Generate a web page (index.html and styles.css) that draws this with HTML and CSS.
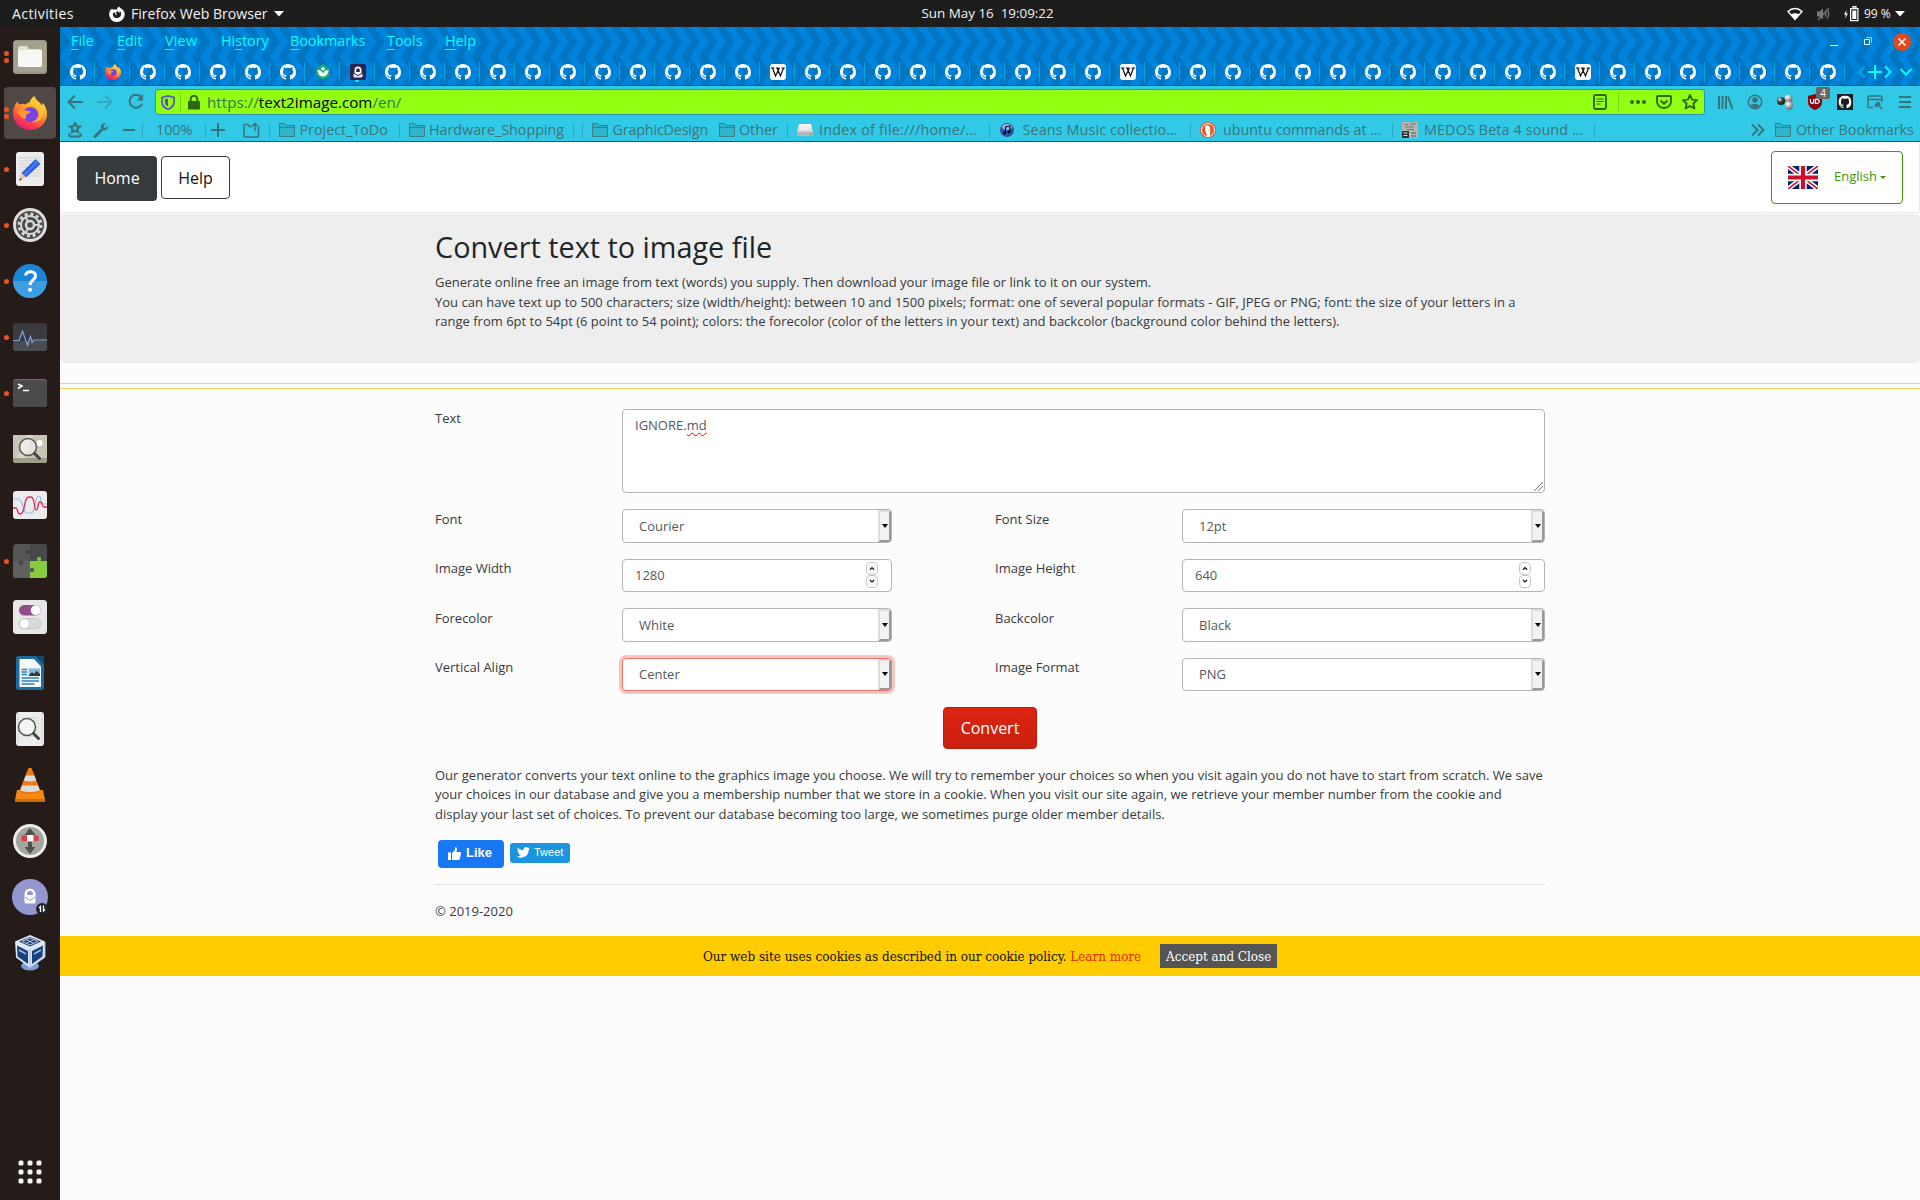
FILE: index.html
```html
<!DOCTYPE html>
<html lang="en">
<head>
<meta charset="utf-8">
<title>Convert text to image file</title>
<link rel="stylesheet" href="styles.css">
</head>
<body>
<svg class="defs" width="0" height="0">
  <defs>
    <linearGradient id="fx" x1=".8" y1="0" x2=".3" y2="1"><stop offset="0" stop-color="#fff14a"/><stop offset=".35" stop-color="#ffb02a"/><stop offset=".7" stop-color="#ff4f3c"/><stop offset="1" stop-color="#e5147a"/></linearGradient>
    <linearGradient id="silver" x1="0" y1="0" x2="0" y2="1"><stop offset="0" stop-color="#fff"/><stop offset="1" stop-color="#b9b9b9"/></linearGradient>
    <radialGradient id="ball" cx=".35" cy=".3" r=".8"><stop offset="0" stop-color="#fff"/><stop offset="1" stop-color="#555"/></radialGradient>
    <radialGradient id="dark" cx=".35" cy=".3" r=".8"><stop offset="0" stop-color="#ddd"/><stop offset=".5" stop-color="#333"/><stop offset="1" stop-color="#111"/></radialGradient>
    <symbol id="github" viewBox="0 0 16 16"><path d="M8 0C3.58 0 0 3.58 0 8c0 3.54 2.29 6.53 5.47 7.59.4.07.55-.17.55-.38 0-.19-.01-.82-.01-1.49-2.01.37-2.53-.49-2.69-.94-.09-.23-.48-.94-.82-1.13-.28-.15-.68-.52-.01-.53.63-.01 1.08.58 1.23.82.72 1.21 1.87.87 2.33.66.07-.52.28-.87.51-1.07-1.78-.2-3.64-.89-3.64-3.95 0-.87.31-1.59.82-2.15-.08-.2-.36-1.02.08-2.12 0 0 .67-.21 2.2.82.64-.18 1.32-.27 2-.27s1.36.09 2 .27c1.53-1.04 2.2-.82 2.2-.82.44 1.1.16 1.92.08 2.12.51.56.82 1.27.82 2.15 0 3.07-1.87 3.75-3.65 3.95.29.25.54.73.54 1.48 0 1.07-.01 1.93-.01 2.2 0 .21.15.46.55.38A8.01 8.01 0 0 0 16 8c0-4.42-3.58-8-8-8z"/></symbol>
    <symbol id="firefox" viewBox="0 0 34 34"><path d="M17 34C7.500 34 0 27 0 17.500 0 12 2 8 4.500 5.500 4.800 7 5.500 8 6.500 8.500 9 7.500 10.500 7.600 12.500 8.500c1.500-1.500 2.500-1.800 4-2C17 4 19 1.500 21.500 0c.5 3.500 5 5.500 7.500 9.500.5-1 .5-2 .3-3C32 9 34 13.500 34 18c0 9-7.500 16-17 16z" fill="url(#fx)"/><circle cx="17.500" cy="18.500" r="7.600" fill="#7542e5"/><path d="M4.500 14.500c4-2.500 7-.5 8.500 0 2.500.5 5 .5 4.500 1.600-.5 1.200-2.500 1.500-4 2.500-1 1-.8 3-.3 4.400-4 0-7.700-3-8.700-8.500z" fill="#ff9a2e"/><path d="M18 8c3 0 8 3 8.500 9 .3 5-4 9-9 8.500 7 2 13.500-2.500 13-9.500C30 10 23 5 22 1c-2.500 2-3.500 5-4 7z" fill="#ffc43a" opacity=".8"/></symbol>
    <symbol id="wiki" viewBox="0 0 16 16"><rect width="16" height="16" rx="3" fill="#fff"/><path d="M1 4h3.500M6 4h3.500M11.500 4H15M2.500 4l3 8 4-8M7 4l3.500 8 3-8" fill="none" stroke="#111" stroke-width="1.200"/></symbol>
    <symbol id="leaf" viewBox="0 0 16 16"><path d="M8 0l6.900 4v8L8 16l-6.900-4V4z" fill="#16a679"/><path d="M2.500 6c3 0 5 1.500 5.500 4 .5-2.500 2.500-4 5.500-4-.2 4-2.300 6.500-5.500 6.500S2.700 10 2.500 6z" fill="#fff"/><circle cx="8" cy="4.800" r="1.800" fill="#fff"/></symbol>
    <symbol id="proton" viewBox="0 0 16 16"><rect width="16" height="16" rx="2" fill="#2b2450"/><path d="M4.500 9V6a3.500 3.500 0 0 1 7 0v3L8 11zM6.200 8h3.600V6a1.800 1.800 0 0 0-3.600 0z" fill="#fff" fill-rule="evenodd"/><path d="M3.500 9.500L8 12l4.500-2.500v3q0 1-1 1h-7q-1 0-1-1z" fill="#e6e3f3"/></symbol>
    <symbol id="folder" viewBox="0 0 16 14"><path d="M.5 13.500V.5h5l1.500 2h8.500v11zM.5 4.500h15" fill="#2fb3cb" stroke="#397f84"/></symbol>
    <symbol id="lens" viewBox="0 0 34 34"><circle cx="15" cy="13" r="8.500" fill="#fff" fill-opacity=".55" stroke="#555" stroke-width="1.500"/><path d="M21.500 19.500l5 5" stroke="#444" stroke-width="3" stroke-linecap="round"/></symbol>
  </defs>
</svg>

<header class="topbar">
  <span class="act">Activities</span>
  <svg width="16" height="16" viewBox="0 0 16 16"><path d="M8 16A7.700 7.700 0 0 1 1.500 4L3.200 2.500l.6 1.300 2-.6 1.500.8L8.500 2 10 .2l.8 1.600C14 3 15.700 5.500 15.700 8.400A7.700 7.700 0 0 1 8 16zM5.500 6.300l-1.500.8c-.6 2.500 1 5 4 5 4 0 5.500-5 2.700-7l.3 2C10 6.200 9.500 5.500 8.200 5.300L6.500 7.200l1.500.6-1 1.700z" fill="#fff" fill-rule="evenodd"/></svg>
  <span class="app">Firefox Web Browser</span>
  <svg width="10" height="6"><path d="M0 0h10L5 5.500z" fill="#fff"/></svg>
  <span class="clock">Sun May 16&nbsp; 19:09:22</span>
  <svg width="16" height="14" viewBox="0 0 16 14"><path d="M1 4.500C5 .5 11 .5 15 4.500L8 12.500z" fill="none" stroke="#fff" stroke-width="1.300"/><path d="M4 7.500q4-2.500 8 0l-4 5z" fill="#fff"/></svg>
  <svg width="15" height="14" viewBox="0 0 15 14"><path d="M1 4.500h2.500L7 1.500v11L3.500 9.500H1z" fill="#777"/><path d="M9 4.500q2 2.500 0 5M11 2.500q3.500 4.500 0 9M13 1L2 13" fill="none" stroke="#777" stroke-width="1.300"/></svg>
  <svg width="15" height="16" viewBox="0 0 15 16"><path d="M2.500 4L0 8.500h1.800L1 12.500l3-5H2.200z" fill="#fff"/><path d="M6.600 2.600h7.300v12H6.600zM9 .5h3v1.500H9z" fill="none" stroke="#fff" stroke-width="1.200"/><path d="M8.300 4.500h4V13h-4z" fill="#fff"/></svg>
  <span class="batt">99 %</span>
  <svg width="10" height="6"><path d="M0 0h10L5 5.500z" fill="#fff"/></svg>
</header>

<div class="desktop">
<nav class="dock">
  <div class="item run2"><i></i><svg viewBox="0 0 34 34"><rect width="34" height="34" rx="3.500" fill="#979382"/><rect x="1" y="1" width="32" height="31" rx="3" fill="#a5a18f"/><path d="M5 8q0-2 2-2h7l2 3h11q2 0 2 2v14q0 2-2 2H7q-2 0-2-2z" fill="#e3dfd5"/><rect x="5" y="10" width="24" height="17" rx="2" fill="#f7f7f5"/></svg></div>
  <div class="item run2 active"><i></i><svg><use href="#firefox"/></svg></div>
  <div class="item run"><i></i><svg viewBox="0 0 34 34"><rect x="3" width="28" height="34" rx="3" fill="#ededed"/><path d="M6 6h22M6 9h22M6 12h22M6 15h22M6 18h22M6 21h22M6 24h22" stroke="#cfcfcf"/><path d="M22.500 7l5 5L13 25.500 8.500 21z" fill="#2f62dd"/><path d="M24.500 9.500L11 23.500" stroke="#5288f5" stroke-width="1.500"/><path d="M8.500 21l4.500 4.500-6.500 3z" fill="#e8c9a0"/><path d="M7.300 26l1.500 1.500-2.500 1.200z" fill="#222"/></svg></div>
  <div class="item run"><i></i><svg viewBox="0 0 34 34"><circle cx="17" cy="17" r="17" fill="#dedede"/><circle cx="17" cy="17" r="14" fill="#4a4a4a"/><circle cx="17" cy="17" r="11" fill="none" stroke="#d8d8d8" stroke-width="3" stroke-dasharray="3 2.760"/><circle cx="17" cy="17" r="9" fill="none" stroke="#d8d8d8" stroke-width="2"/><circle cx="17" cy="17" r="4" fill="none" stroke="#d8d8d8" stroke-width="2.500"/><path d="M21 17h5M15 13.500l-2.500-4.500M15 20.500L12.500 25" stroke="#d8d8d8" stroke-width="2"/></svg></div>
  <div class="item run"><i></i><svg viewBox="0 0 34 34"><circle cx="17" cy="17" r="17" fill="#1a85d6"/><path d="M0 17a17 17 0 0 0 34 0z" fill="#3d9fe2"/><path d="M12.500 11.500c1-5 10.500-5 10 .5-.3 4-5.500 4.500-5.500 9" fill="none" stroke="#fff" stroke-width="3"/><circle cx="17" cy="25.800" r="2" fill="#fff"/></svg></div>
  <div class="item run"><i></i><svg viewBox="0 0 34 34"><rect y="3" width="34" height="28" rx="3" fill="#3a3b3e"/><rect y="21" width="34" height="10" rx="3" fill="#4b4c52"/><path d="M0 20.500h6L9.500 11l5 14.500 3-9 1.700 6 1.500-2.500H34" fill="none" stroke="#8aa0e6" stroke-width="1.200"/></svg></div>
  <div class="item run"><i></i><svg viewBox="0 0 34 34"><rect y="3" width="34" height="28" rx="3" fill="#6a6a6a"/><rect y="4" width="34" height="27" rx="3" fill="#4b4b4b"/><path d="M5 8l4 2-4 2.500M10 14.500h6" fill="none" stroke="#fff" stroke-width="1.500"/></svg></div>
  <div class="item"><i></i><svg viewBox="0 0 34 34"><rect y="3" width="34" height="28" rx="3" fill="#d8d7cc"/><path d="M0 3h14L4 26H0zM20 3h14v23H12z" fill="#c6c5b6"/><path d="M0 26h34v2q0 3-3 3H3q-3 0-3-3z" fill="#a09c8a"/><circle cx="26.500" cy="11" r="3" fill="#fff"/><use href="#lens" y="2"/></svg></div>
  <div class="item"><i></i><svg viewBox="0 0 34 34"><rect y="3" width="34" height="28" rx="3" fill="#ececec"/><path d="M0 11h5c6 0 4 14 9 14h4c5 0 3-17 8-17 3 0 1 8 4 8h4" fill="none" stroke="#8fbfe6" stroke-width="1.200"/><path d="M0 20h3c2 0 1 6 4 6 6 0 3-17 9-17h2c4 0 3 13 5 13 3 0 1-8 4-8s2 5 4 5h3" fill="none" stroke="#dd2c50" stroke-width="1.300"/></svg></div>
  <div class="item run"><i></i><svg viewBox="0 0 34 34"><rect width="34" height="34" rx="3.500" fill="#555"/><path d="M17 0h14q3 0 3 3v14H17z" fill="#484848"/><path d="M0 17h17v17H3q-3 0-3-3z" fill="#606060"/><path d="M17 17h17v14q0 3-3 3H17z" fill="#86cc3c"/><circle cx="14.500" cy="8" r="2.200" fill="#444"/><circle cx="8" cy="19" r="2.200" fill="#444"/><circle cx="26" cy="15" r="2.200" fill="#76c032"/><circle cx="19" cy="26" r="2.200" fill="#555"/></svg></div>
  <div class="item"><i></i><svg viewBox="0 0 34 34"><rect width="34" height="34" rx="3.500" fill="#e8e8e8"/><rect x="6" y="5" width="22" height="10.500" rx="5.200" fill="#924d8b"/><circle cx="22.800" cy="10.200" r="5" fill="#fff"/><rect x="6" y="18.500" width="22" height="10.500" rx="5.200" fill="#d9d9d9" stroke="#bbb" stroke-width=".7"/><circle cx="11.500" cy="23.700" r="5" fill="#fff" stroke="#bbb" stroke-width=".7"/></svg></div>
  <div class="item"><i></i><svg viewBox="0 0 34 34"><path d="M6 0h17l8 8v23q0 3-3 3H6q-3 0-3-3V3q0-3 3-3z" fill="#1e6c9f"/><path d="M6.500 3H21l7 7.500V31H6.500z" fill="#f4f8fb"/><path d="M24 0h7v8z" fill="#0f4b74"/><path d="M8.500 13.500h5.500M8.500 16h5.500M8.500 18.500h5.500M8.500 22h17.500M8.500 25h17.500M8.500 28h13" stroke="#2680b8" stroke-width="1.300"/><path d="M15.500 12.500H27v7.500H15.500z" fill="#84b9dc"/><path d="M15.500 20l3.500-4 2 2 2.500-3L27 18v2z" fill="#333"/></svg></div>
  <div class="item"><i></i><svg viewBox="0 0 34 34"><rect x="3" width="28" height="34" rx="3" fill="#eee"/><path d="M5 2v30M29 2v30" stroke="#999" stroke-dasharray="1 1.500"/><path d="M8 6h18M8 9h18M8 12h18M8 15h18M8 18h18M8 21h18M8 24h18" stroke="#d2d0c0" stroke-width=".8"/><use href="#lens" x="-1" y="2"/></svg></div>
  <div class="item"><i></i><svg viewBox="0 0 34 34"><path d="M4 22h26l2 10q0 2-2 2H4q-2 0-2-2z" fill="#f28a13"/><path d="M2 31h30v3H2z" fill="#d36c05"/><path d="M15.500 0h3L28 24q-11 4-22 0z" fill="#ee7a10"/><path d="M12.800 7.500h8.400l2 5q-6.200 2-12.400 0zM9 17.500h16l1.700 5q-9.700 3-19.400 0z" fill="#dcdcdc"/></svg></div>
  <div class="item"><i></i><svg viewBox="0 0 34 34"><circle cx="17" cy="17" r="17" fill="#ececec"/><circle cx="17" cy="17" r="14" fill="#a3a59f"/><path d="M17 4l5.500 7H19v12h3.500L17 30l-5.500-7H15V11h-3.500z" fill="#4e504c"/><rect x="8.500" y="11.500" width="17" height="5.500" rx="1" fill="#e23b4e"/><rect x="14" y="11" width="6.500" height="6.500" rx="1" fill="#fff"/></svg></div>
  <div class="item"><i></i><svg viewBox="0 0 34 34"><circle cx="17" cy="17" r="18" fill="#9396cf"/><path d="M11.500 22v-8a5.500 5.500 0 0 1 11 0v8q0 1.500-1.500 1.500h-8q-1.500 0-1.500-1.500zM14 15h6v-1a3 3 0 0 0-6 0z" fill="#fff" fill-rule="evenodd"/><path d="M12 17l5 3.500 5-3.500" fill="none" stroke="#9396cf"/><circle cx="29" cy="29" r="6" fill="#20242b"/><path d="M27.500 32v-5.500l-1.500 1.500m4.500-2.500V31l1.500-1.500" fill="none" stroke="#fff" stroke-width="1.300"/></svg></div>
  <div class="item"><i></i><svg viewBox="0 0 34 34"><ellipse cx="17" cy="30" rx="9" ry="4.500" fill="#7d9dd6"/><path d="M17-1l15 6.500v16L17 32 3 21.500l-1-16z" fill="#dfe6f5"/><path d="M6 5.500L17 1l11 4.500-11 5z" fill="#183a6e"/><path d="M9 5.500L17 2l8 3.500-8 3.500zM13 3.500l8 4M21 3.500l-8 4" stroke="#b9c8e6" fill="none"/><path d="M4 9.500L15 15v13L4.500 20.500zM30 9.500L19 15v13l10.500-7.500z" fill="#16427c"/><path d="M6 14l7 4M21 18l7-4" stroke="#9fb6dc" stroke-width="1.500"/><path d="M17 13v18M32 6v15L17 32" stroke="#9cb3df" fill="none"/></svg></div>
  <svg class="grid9" width="24" height="24" viewBox="0 0 24 24"><g fill="#f3f3f3"><rect x=".5" y=".5" width="5" height="5" rx="1.500"/><rect x="9.500" y=".5" width="5" height="5" rx="1.500"/><rect x="18.500" y=".5" width="5" height="5" rx="1.500"/><rect x=".5" y="9.500" width="5" height="5" rx="1.500"/><rect x="9.500" y="9.500" width="5" height="5" rx="1.500"/><rect x="18.500" y="9.500" width="5" height="5" rx="1.500"/><rect x=".5" y="18.500" width="5" height="5" rx="1.500"/><rect x="9.500" y="18.500" width="5" height="5" rx="1.500"/><rect x="18.500" y="18.500" width="5" height="5" rx="1.500"/></g></svg>
</nav>

<div class="browser">
  <div class="chrome">
    <svg class="zigzag" width="1860" height="58"><defs><pattern id="zz" x="8.750" y="0" width="17.500" height="30" patternUnits="userSpaceOnUse"><path d="M0 0h8.750l10 15-10 15H0l10-15zM-17.500 0h8.750l10 15-10 15h-8.750l10-15z" fill="#0076c3"/></pattern></defs><rect width="1860" height="58" fill="#0084db"/><rect width="1860" height="58" fill="url(#zz)"/></svg>
    <div class="menu">
      <span><u>F</u>ile</span><span><u>E</u>dit</span><span class="wider"><u>V</u>iew</span><span>Hi<u>s</u>tory</span><span><u>B</u>ookmarks</span><span><u>T</u>ools</span><span><u>H</u>elp</span>
      <svg width="8" height="16"><path d="M0 12.500h8" stroke="#fff"/></svg>
      <svg width="8" height="16"><path d="M.5 6.500h5v5h-5z" fill="none" stroke="#fff"/><path d="M2 4.500h5.500V10" fill="none" stroke="#9cd0f0"/></svg>
      <svg class="close" width="18" height="18" viewBox="0 0 18 18"><circle cx="9" cy="9" r="9" fill="#e2491a"/><path d="M5.500 5.500l7 7m0-7l-7 7" stroke="#fff" stroke-width="1.500"/></svg>
    </div>
    <div class="tabs">
      <div class="tablist" id="tabs"></div>
      <svg class="tabctl" width="66" height="28" viewBox="0 0 66 28"><path d="M10.500 9L5.500 14l5 5" fill="none" stroke="#00a6e3" stroke-width="2"/><path d="M19.500 0v28" stroke="#0a5fa8" /><path d="M21 7v14M14 14h14M31 8.500L36.500 14 31 19.500M46.500 11l5.500 5.500 5.500-5.500" fill="none" stroke="#0ff" stroke-width="2"/></svg>
    </div>
  </div>

  <div class="nav">
    <svg width="16" height="16" viewBox="0 0 16 16"><path d="M16 8H1.500M8 1.500L1.500 8 8 14.500" class="ln"/></svg>
    <svg width="16" height="16" viewBox="0 0 16 16"><path d="M0 8h14.500M8 1.500L14.500 8 8 14.500" class="ln dim"/></svg>
    <svg width="16" height="16" viewBox="0 0 16 16"><path d="M13.500 3.500A6.500 6.500 0 1 0 14 10" class="ln"/><path d="M15 0v6.500H8.500z" fill="#39747c"/></svg>
    <div class="url">
      <svg width="14" height="15" viewBox="0 0 14 15"><path d="M1 2.500L7 1l6 1.500V7c0 3.500-2.500 6-6 7.200C3.500 13 1 10.500 1 7z" fill="none" stroke="#5a50c8" stroke-width="1.700"/><path d="M7 3.500v8C5 10.500 3.800 9 3.800 7V4.200z" fill="#5a50c8"/></svg>
      <i class="sep g"></i>
      <svg width="12" height="15" viewBox="0 0 12 15"><rect y="6" width="12" height="8.500" rx="1" fill="#2f6614"/><path d="M2.700 7V4a3.300 3.300 0 0 1 6.600 0v3" fill="none" stroke="#2f6614" stroke-width="2"/></svg>
      <span class="addr">https://<b>text2image.com</b>/en/</span>
      <svg width="16" height="16" viewBox="0 0 16 16"><rect x="2" y="1" width="12" height="14" rx="1.500" class="gr"/><path d="M4.500 5h7M4.500 7.500h7M4.500 10h4" stroke="#2f6614" stroke-width="1.200"/></svg>
      <i class="sep g"></i>
      <svg width="16" height="16" viewBox="0 0 16 16" fill="#2f6614"><circle cx="2" cy="8" r="2"/><circle cx="8" cy="8" r="2"/><circle cx="14" cy="8" r="2"/></svg>
      <svg width="16" height="16" viewBox="0 0 16 16"><path d="M2 2h12q1 0 1 1v4.500a7 6.500 0 0 1-14 0V3q0-1 1-1zM4.500 6.500L8 9.800l3.500-3.300" class="gr"/></svg>
      <svg width="16" height="16" viewBox="0 0 16 16"><path d="M8 1l2.100 4.600 5 .5-3.700 3.400 1 5L8 12l-4.400 2.500 1-5L.9 6.100l5-.5z" class="gr"/></svg>
    </div>
    <svg width="16" height="16" viewBox="0 0 16 16"><path d="M2 2v13M5.500 2v13M9 2v13M11 2.500L15.500 15" class="ln"/></svg>
    <svg width="16" height="16" viewBox="0 0 16 16"><circle cx="8" cy="8" r="6.700" class="ln thin"/><circle cx="8" cy="6" r="2.800" fill="#39747c"/><path d="M3.500 12c1-3 8-3 9 0-2 2.500-7 2.500-9 0z" fill="#39747c"/></svg>
    <svg width="16" height="16" viewBox="0 0 16 16"><circle cx="11.500" cy="4.500" r="4" fill="url(#ball)"/><circle cx="4" cy="7" r="4" fill="url(#dark)"/><circle cx="12" cy="11.500" r="4.200" fill="url(#ball)"/></svg>
    <div class="ub"><svg width="16" height="16" viewBox="0 0 16 16"><path d="M8 0l7 2v6c0 4-3 6.500-7 8-4-1.500-7-4-7-8V2z" fill="#8a0410"/><path d="M3.500 5v3.500q2 1.500 3.300 0V5M8.500 5v4.500c5 0 5-4.500 0-4.300" fill="none" stroke="#fff" stroke-width="1.200"/></svg><em>4</em></div>
    <svg width="16" height="16" viewBox="0 0 16 16"><rect width="16" height="16" fill="#1b1f23"/><use href="#github" x="1.500" y="1.500" width="13" height="13" fill="#fff"/></svg>
    <svg width="16" height="16" viewBox="0 0 16 16"><path d="M6 13.500H2q-1 0-1-1V3q0-1 1-1h12q1 0 1 1v5M1 5.500h14M12 12l3 3" class="ln thin"/><path d="M11 7l3 3.500-4.500 3-2.500-2z" fill="#39747c"/></svg>
    <svg width="16" height="16" viewBox="0 0 16 16"><path d="M2 3h12M2 8h12M2 13h12" class="ln"/></svg>
  </div>

  <div class="marks">
    <svg width="16" height="16" viewBox="0 0 16 16"><path d="M8 1l1.600 3.200 3.400.4-2.500 2.300.7 3.500L8 8.700l-3.200 1.700.7-3.500L3 4.600l3.400-.4zM2 11.500q0 3 2 3h8q2 0 2-3" class="ln"/></svg>
    <svg width="16" height="16" viewBox="0 0 16 16"><path d="M2 14.500L9 7.500" class="ln fat"/><path d="M8 6C7 3 10 .5 13 1.500L10.500 4l.5 1.500 1.500.5L15 3.500C15.500 7 13 9 10 8z" fill="#39747c"/></svg>
    <svg width="16" height="16" viewBox="0 0 16 16"><path d="M2 8h12" class="ln"/></svg>
    <i class="sep"></i><span>100%</span><i class="sep"></i>
    <svg width="16" height="16" viewBox="0 0 16 16"><path d="M0 8h14M7 1v14" class="ln"/></svg>
    <svg width="17" height="16" viewBox="0 0 17 16"><path d="M9 4.500H6.500L5 2.500H2q-1 0-1 1V14q0 1 1 1h12.500q1 0 1-1V4.500H15M12 9V1.500M9.500 4L12 1.500 14.500 4" class="ln thin"/></svg>
    <i class="sep"></i>
    <svg width="16" height="14"><use href="#folder"/></svg><span>Project_ToDo</span><i class="sep"></i>
    <svg width="16" height="14"><use href="#folder"/></svg><span>Hardware_Shopping</span><i class="sep"></i><i class="sep"></i>
    <svg width="16" height="14"><use href="#folder"/></svg><span class="tight">GraphicDesign</span>
    <svg width="16" height="14"><use href="#folder"/></svg><span>Other</span><i class="sep"></i>
    <svg width="16" height="16" viewBox="0 0 16 16"><path d="M2 2h12l2 8v4H0v-4z" fill="url(#silver)"/><path d="M0 10h16v4H0z" fill="#b5b5b5"/><ellipse cx="8" cy="6" rx="4.500" ry="2.500" fill="#eee"/><path d="M13 12h1.500" stroke="#3a3" /></svg><span class="wider">Index of file:///home/…</span><i class="sep"></i>
    <svg width="14" height="14" viewBox="0 0 14 14"><circle cx="7" cy="7" r="7" fill="#2457ad"/><ellipse cx="7" cy="4" rx="5" ry="3" fill="#8dbcee"/><path d="M5.500 10V4l4.500-1v6" fill="none" stroke="#111" stroke-width="1.200"/><circle cx="4.600" cy="10" r="1.400"/><circle cx="9" cy="9" r="1.400"/></svg><span class="wide">Seans Music collectio…</span><i class="sep"></i>
    <svg width="16" height="16" viewBox="0 0 16 16"><circle cx="8" cy="8" r="8" fill="#de5833"/><circle cx="8" cy="8" r="6.500" fill="none" stroke="#fff"/><path d="M5 4c2-1.500 5-.5 5 2.500v7.500H7C6 10 4.500 7 5 4z" fill="#fff"/><path d="M8.500 7.500l4 .3-3.800 1.500z" fill="#fc3"/><path d="M9 11l3-1v3z" fill="#5b3"/></svg><span>ubuntu commands at …</span><i class="sep"></i>
    <svg width="16" height="16" viewBox="0 0 16 16"><rect width="16" height="16" fill="#b4b4b0"/><path d="M2 2.500h4M8 2h6M3 5h9M5 7.500h7" stroke="#777"/><rect y="9" width="7" height="7" fill="#333"/><path d="M1.500 11h4M1.500 13.500h4" stroke="#ddd"/><path d="M9 11h5M9 14h5" stroke="#888" stroke-width="2"/></svg><span class="wide">MEDOS Beta 4 sound …</span><i class="sep"></i>
    <svg width="14" height="14" viewBox="0 0 14 14"><path d="M1 1.500L6.500 7 1 12.500M7 1.500L12.500 7 7 12.500" class="ln"/></svg>
    <svg width="16" height="14"><use href="#folder"/></svg><span>Other Bookmarks</span>
  </div>

  <main class="page">
    <div class="sitebar">
      <a class="home">Home</a><a class="help">Help</a>
      <a class="lang"><svg width="30" height="23" viewBox="0 0 30 23"><rect width="30" height="23" fill="#012169"/><path d="M0 0l30 23M30 0L0 23" stroke="#fff" stroke-width="4.600"/><path d="M0 0l30 23M30 0L0 23" stroke="#c8102e" stroke-width="1.600"/><path d="M15 0v23M0 11.500h30" stroke="#fff" stroke-width="7.400"/><path d="M15 0v23M0 11.500h30" stroke="#c8102e" stroke-width="4.200"/></svg><span>English</span><svg width="6" height="3"><path d="M0 0h6L3 3z" fill="#469408"/></svg></a>
    </div>
    <section class="jumbo">
      <h1>Convert text to image file</h1>
      <p>Generate online free an image from text (words) you supply. Then download your image file or link to it on our system.<br>You can have text up to 500 characters; size (width/height): between 10 and 1500 pixels; format: one of several popular formats - GIF, JPEG or PNG; font: the size of your letters in a range from 6pt to 54pt (6 point to 54 point); colors: the forecolor (color of the letters in your text) and backcolor (background color behind the letters).</p>
    </section>
    <div class="rule"></div>
    <div class="container">
      <div class="form">
        <label>Text</label>
        <div class="area">IGNORE.<span class="typo">md</span><svg width="9" height="9"><path d="M0 9L9 0M4 9l5-5" stroke="#777" stroke-width="1"/></svg></div>
        <label>Font</label><div class="sel">Courier</div><label class="r">Font Size</label><div class="sel">12pt</div>
        <label>Image Width</label><div class="num">1280<span class="spin"><svg viewBox="0 0 12 12"><path d="M3.500 7.500L6 5l2.500 2.500"/></svg><svg viewBox="0 0 12 12"><path d="M3.500 4L6 6.500 8.500 4"/></svg></span></div><label class="r">Image Height</label><div class="num">640<span class="spin"><svg viewBox="0 0 12 12"><path d="M3.500 7.500L6 5l2.500 2.500"/></svg><svg viewBox="0 0 12 12"><path d="M3.500 4L6 6.500 8.500 4"/></svg></span></div>
        <label>Forecolor</label><div class="sel">White</div><label class="r">Backcolor</label><div class="sel">Black</div>
        <label>Vertical Align</label><div class="sel focus">Center</div><label class="r">Image Format</label><div class="sel">PNG</div>
      </div>
      <button class="convert">Convert</button>
      <p class="about">Our generator converts your text online to the graphics image you choose. We will try to remember your choices so when you visit again you do not have to start from scratch. We save your choices in our database and give you a membership number that we store in a cookie. When you visit our site again, we retrieve your member number from the cookie and display your last set of choices. To prevent our database becoming too large, we sometimes purge older member details.</p>
      <div class="social">
        <a class="like"><svg width="13" height="13" viewBox="0 0 13 13" fill="#fff"><path d="M0 5.500h3V13H0zM4 6l3-3V.5q2-1 2 1.500l-.5 3H12q1.300.3 1 1.500l-1.300 5.500q-.3 1-1.200 1H4z"/></svg>Like</a>
        <a class="tweet"><svg width="13" height="11" viewBox="0 0 24 20" fill="#fff"><path d="M24 2.400c-.9.400-1.800.7-2.800.8 1-.6 1.800-1.600 2.200-2.700-1 .6-2 1-3.100 1.200A4.900 4.900 0 0 0 11.900 6.200C7.800 6 4.200 4 1.700.9.400 3.200 1 6 3.200 7.500c-.8 0-1.600-.2-2.200-.6 0 2.300 1.600 4.400 3.900 4.900-.7.200-1.500.2-2.200.1a4.900 4.900 0 0 0 4.600 3.400A9.900 9.900 0 0 1 0 17.300 14 14 0 0 0 21.500 4.900c1-.7 1.800-1.600 2.500-2.500z"/></svg>Tweet</a>
      </div>
      <div class="copy">© 2019-2020</div>
    </div>
    <div class="cookie"><span>Our web site uses cookies as described in our cookie policy. <a>Learn more</a></span><button>Accept and Close</button></div>
  </main>
</div>
</div>
<script>
// Tab strip: every tab shows the GitHub mark except the ones listed here.
const special = {1: 'firefox', 7: 'leaf', 8: 'proton', 20: 'wiki', 30: 'wiki', 43: 'wiki'};
const strip = document.getElementById('tabs');
for (let i = 0; i < 51; i++) {
  const icon = special[i] || 'github';
  strip.insertAdjacentHTML('beforeend', `<div class="tab ${i === 8 ? 'attn' : ''}"><svg width="16" height="16"><use href="#${icon}"/></svg></div>`);
}
</script>
</body>
</html>
```

FILE: styles.css
```css
* { box-sizing: border-box; }
body { margin: 0; width: 1920px; height: 1200px; overflow: hidden; font: 13px/19.5px "Open Sans", sans-serif; color: #373a3c; background: #fcfcfc; }
svg { display: block; flex: none; }
i { font-style: normal; }
.defs { position: absolute; }

.topbar { height: 27px; background: #1d1d1d; color: #f2f2f2; padding-left: 12px; display: grid; align-items: center; white-space: nowrap; font-size: 14.1px; grid-template-columns: 97px 22px 143px 647.500px 865.500px 29px 28px 20px 31px 25px; }
.topbar span { padding-top: 1px; }
.act { letter-spacing: .38px; }
.clock { font-size: 13.400px; }
.batt { font-size: 12px; }

.desktop { display: flex; height: 1173px; }
.dock { width: 60px; background: #251c19; padding-top: 2px; display: flex; flex-direction: column; }
.item { height: 52px; margin: 2px 4px; border-radius: 4px; display: grid; grid-template-columns: 9px 34px; align-items: center; }
.item svg { width: 34px; height: 34px; overflow: visible; }
.item i { display: flex; flex-direction: column; gap: 2px; }
.run i::before, .run2 i::before, .run2 i::after { content: ""; width: 5px; height: 5px; border-radius: 50%; background: #e95420; }
.active { background: #504845; }
.grid9 { margin: auto auto 16px 18px; }

.browser { width: 1860px; display: flex; flex-direction: column; }
.chrome { height: 59px; position: relative; border-bottom: 1px solid #0a5d9f; }
.zigzag { position: absolute; inset: 0; }
.menu { position: relative; height: 31px; padding: 0 0 4px 11px; display: grid; align-items: center; color: #0ff; font-size: 14.300px; grid-template-columns: 46px 48px 56px 69px 97px 58px 1385px 34px 29px 18px; }
.menu u { text-decoration-thickness: 1px; text-underline-offset: 3px; }
.close { margin-top: 2px; }
.tabs { position: relative; height: 27px; display: flex; }
.tablist { display: flex; padding-top: 4px; }
.tab { width: 35px; height: 20px; padding-left: 1px; border-right: 1px solid #00a3dc; display: flex; justify-content: center; align-items: center; fill: #fff; }
.attn { background: radial-gradient(circle 2.500px at 17px 19px, #00e5ff 90%, transparent); }
.tabctl { margin: 0 0 0 9px; }

.nav { height: 32px; background: #31c9e6; padding-left: 7px; display: grid; align-items: center; grid-template-columns: 30px 31px 27px 1550px repeat(6, 30px) 16px; }
.nav > svg:nth-child(n+5), .ub { margin-left: 12px; }
.ln { fill: none; stroke: #39747c; stroke-width: 2; }
.thin { stroke-width: 1.500; }
.fat { stroke-width: 3; stroke-linecap: round; }
.dim { opacity: .4; }
.gr { fill: none; stroke: #2f6614; stroke-width: 1.900; stroke-linejoin: round; }
.url { height: 26px; border: 1px solid #2b93b5; border-radius: 3px; background: #93ff12; display: flex; align-items: center; padding: 0 6px 0 5px; gap: 10px; }
.url > svg:first-child { margin-right: -5px; }
.url > svg:nth-child(3) { margin: 0 -4px 0 -4px; }
.addr { flex: 1; padding: 1px 0 0 1px; font-size: 15.200px; color: #2f7a4a; white-space: nowrap; }
.addr b { font-weight: normal; color: #000; }
.sep { width: 1px; height: 14px; background: #2ba9c2; }
.sep.g { height: 18px; background: #78d012; margin-right: 1px; }
.ub { position: relative; width: 16px; }
.ub em { position: absolute; left: 9px; top: -7px; width: 14px; height: 12px; border-radius: 2px; background: #666; color: #fff; font: 10px/12px "Open Sans", sans-serif; text-align: center; }

.marks { height: 24px; background: #31c9e6; border-bottom: 1px solid #0a5d8f; padding-left: 7px; display: grid; align-items: center; color: #39747c; font-size: 14.300px; white-space: nowrap;
  grid-template-columns: 26px 28px 21px 14px 49px 6px 32px 26px 10px 20.500px 99.500px 10px 20px 144px 9px 10px 20.500px 106.500px 20px 48px 10px 22px 170px 11px 22.500px 167.500px 10px 23px 169px 10px 22px 170px 157px 24px 21px 124px; }
.tight { letter-spacing: -.15px; }
.wide { letter-spacing: .15px; }
.wider { letter-spacing: .24px; }

.page { flex: 1; background: #fcfcfc; }
.sitebar { height: 71px; background: #fff; border: solid #e9e9e9; border-width: 0 1px 1px 0; padding: 9px 16px 0 17px; display: flex; align-items: flex-start; font-size: 16px; }
.home, .help { margin-top: 5px; border-radius: 4px; text-align: center; }
.home { width: 80px; height: 45px; line-height: 45px; background: #373a3c; color: #fff; }
.help { width: 69px; height: 43px; line-height: 43px; margin-left: 4px; border: 1px solid #373a3c; color: #111; }
.lang { margin-left: auto; width: 132px; height: 53px; border: 1px solid #469408; border-radius: 4px; display: flex; align-items: center; padding-left: 16px; font-size: 13px; color: #469408; }
.lang span { margin: 0 3px 2px 16px; width: 43px; }
.jumbo { height: 149px; margin-top: 1px; border-radius: 5px; background: #eee; padding: 17px 375px 0; }
h1 { margin: 0 0 10px; font: 28.800px/32px "Open Sans", sans-serif; color: #212529; }
p { margin: 0; }
.rule { height: 6px; margin: 20px 0; border: solid #fc6; border-width: 1px 0; }
.container { width: 1110px; margin-left: 375px; }
.form { display: grid; grid-template-columns: 187px 270px 103px 187px 363px; row-gap: 16px; grid-template-rows: 84px repeat(4, 33.500px); }
.form label:not(:first-child) { padding-top: .6px; }
.form .r { grid-column: 3 / 5; padding-left: 103px; }
.area { grid-column: 2 / 6; padding: 6px 12px; position: relative; }
.area, .sel, .num { border: 1px solid #b5b5b5; border-radius: 4px; background: #fff; color: #55595c; }
.area svg { position: absolute; right: 1px; bottom: 1px; }
.typo { text-decoration: underline wavy #e00 1.300px; text-underline-offset: 1.500px; }
.sel { display: flex; align-items: center; padding: 1px 0 0 16px; }
.sel::after { content: ""; flex: none; margin: -1px 0 0 auto; align-self: stretch; width: 9px; border: 2px solid; border-color: #ddd #999 #999 #ddd; border-radius: 0 3px 3px 0; background: #f2f2f2 url("data:image/svg+xml,%3Csvg xmlns='http://www.w3.org/2000/svg' width='6' height='4'%3E%3Cpath d='M0 0h6L3 4z'/%3E%3C/svg%3E") center / 6px 4px no-repeat border-box; }
.focus { padding-top: 0; border-color: #f0776c; box-shadow: 0 0 0 3px #f8c6c2; }
.focus::after { margin-top: 0; }
.num { display: flex; align-items: center; justify-content: space-between; padding: 0 13px 0 12px; }
.spin svg { width: 12px; height: 13px; border: 1px solid #ccc7c2; border-radius: 4px; background: #fff; fill: none; stroke: #111; stroke-width: 1.500; }
.convert { display: block; width: 94px; height: 42px; margin: 15.500px 0 17px 508px; border: 1px solid #c01c0c; border-radius: 4px; background: linear-gradient(#dd2411, #c9210f); color: #fff; font: 16px "Open Sans", sans-serif; padding: 1px 0 0; }
.social { display: flex; align-items: center; gap: 6px; margin: 15.500px 0 16px 3px; font-family: "Liberation Sans", sans-serif; color: #fff; }
.like { width: 66px; height: 28px; border-radius: 4px; background: #1877f2; display: flex; align-items: center; gap: 5px; padding: 0 0 2px 10px; font-size: 13px; font-weight: bold; }
.like svg { margin-top: 2px; }
.tweet { width: 60px; height: 20px; margin-bottom: 2px; border-radius: 3px; background: #1b95e0; display: flex; align-items: center; gap: 4px; padding-left: 7px; font-size: 11px; }
.copy { border-top: 1px solid #e0e0e0; padding-top: 17.500px; height: 52px; }
.cookie { height: 40px; background: #fc0; display: flex; align-items: center; padding-left: 643px; gap: 19px; font: 13.333px "DejaVu Serif Condensed", "DejaVu Serif", serif; color: #111; white-space: nowrap; }
.cookie span { padding-top: 2px; }
.cookie a { color: #e32b10; }
.cookie button { width: 117px; height: 24px; border: 0; padding: 1px 0 0; background: #555; color: #fff; font: inherit; }
```
